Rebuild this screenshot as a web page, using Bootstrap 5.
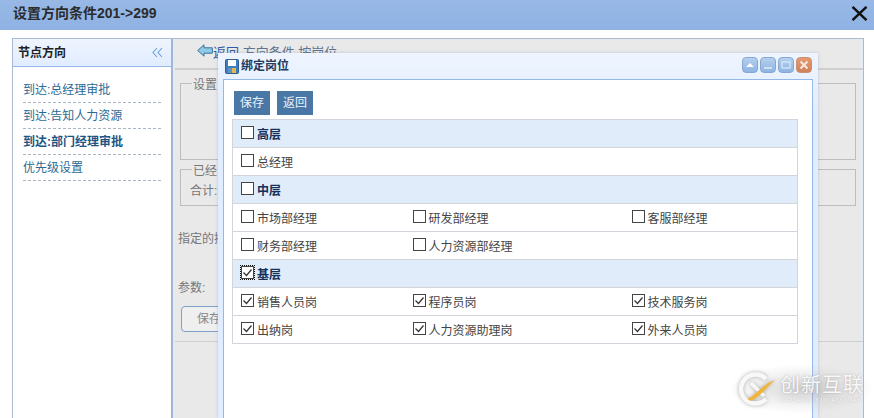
<!DOCTYPE html>
<html lang="zh">
<head>
<meta charset="utf-8">
<title>设置方向条件</title>
<link href="https://cdn.jsdelivr.net/npm/bootstrap@5.3.0/dist/css/bootstrap.min.css" rel="stylesheet">
<style>
html,body{height:418px;overflow:hidden}
body{font-family:"Liberation Sans","Noto Sans CJK SC",sans-serif;font-size:12px;color:#444;background:#fff;position:relative}
.topbar{height:30px;background:linear-gradient(#98b9e6,#8fb2e3);padding:0 6px 3px 13px;color:#333}
.topbar h1{font-size:14px;font-weight:700;margin:0;line-height:27px;color:#2b2b2b}
.topx{line-height:0}
.stage{height:388px;padding:8px 10px 0 12px}
.sidepane{width:161px;border:1px solid #a9bad3;border-bottom:0;border-right:2px solid #9db6da}
.sidehead{height:28px;background:linear-gradient(#eff5ff,#e0ecff);border-bottom:1px solid #95b8e7;padding:0 8px 0 5px;font-weight:700;color:#222}
.sidelist{padding:10px 10px 0 10px;list-style:none;margin:0}
.sidelist li{height:26px;line-height:26px;border-bottom:1px dashed #a9b6c2;color:#2b6a94;white-space:nowrap}
.sidelist li.now{font-weight:700;color:#1f5583}
.mainpane{flex:1;background:#e9e9e9;border:1px solid #a9bad3;border-left:0;border-bottom:0;color:#777;padding-left:2px;box-shadow:inset -2px 0 0 #e3ecf8}
.backrow{height:31px;border-bottom:2px solid #cfcfcf;color:#5f7290;padding-left:22px;line-height:28px;font-size:13px;white-space:nowrap;overflow:hidden}
.backrow b{font-weight:400;color:#2a5ca8}
.backrow svg{margin-top:-7px}
.areabox{border:1px solid #bdbdbd;margin:0 7px 0 5px;padding:0 0 0 11px}
.areabox.one{margin-top:13px;height:77px}
.areabox.two{margin-top:9px;height:37px}
.lgd{display:block;width:max-content;background:#e9e9e9;padding:0 1px;margin-top:-6px;line-height:14px}
.heji{padding-top:4px;margin-left:-2px}
.fieldtxt{padding-left:3px;margin:0}
.f1{margin-top:24px}
.f2{margin-top:31px}
.greybtn{display:block;width:60px;height:26px;margin:9px 0 0 6px;border:1px solid #7e9fc6;border-radius:4px;padding-left:15px;line-height:24px;color:#888;background:#efefef}
.rule{border-top:1px solid #cfcfcf;margin-top:9px}
.winbox{position:absolute;left:218px;top:53px;width:600px;height:365px;overflow:hidden;background:linear-gradient(#eff5ff,#e0ecff 60px);box-shadow:0 0 3px rgba(120,140,170,.4);padding:0 5px}
.winhead{height:26px;padding-left:2px;font-weight:700;color:#223a5e}
.winicon{margin-right:2px}
.wintools{margin-left:auto;gap:2px;margin-top:-2px;margin-right:1px}
.tool{width:16px;height:16px;border-radius:4px;border:1px solid #85a7d3;background:linear-gradient(#b6d0ef,#8fb4e2);line-height:0}
.tool.shut{background:linear-gradient(#e49a72,#d0805a);border-color:#c9916f}
.winbody{background:#fff;border:1px solid #95b8e7;border-bottom:0;height:339px;padding:11px 15px 0 8px}
.squarebtn{background:#4a78a6;color:#e9f1fa;border:0;border-radius:0;height:24px;width:36px;padding:0;font-size:12px;line-height:24px}
.btnline{gap:7px;height:28px;padding-left:2px}
.bindtable{width:566px;margin:0;table-layout:fixed;border-collapse:collapse;border:1px solid #d2d6dc;--bs-table-bg:transparent;--bs-table-border-color:#d2d6dc}
.bindtable td{height:28px;padding:2px 0 0 8px;vertical-align:middle;border-width:0 0 1px 0;border-style:solid;border-color:#d2d6dc;color:#444;white-space:nowrap;line-height:14px}
.bindtable tr.grp td{background:#e1ecfa;font-weight:700;color:#12305c;font-size:12px}
.pick{display:flex;align-items:center;gap:3px;margin:0}
.pick input.form-check-input{width:13px;height:13px;margin:-4px 0 0 0;flex:none;border:1px solid #444;border-radius:0;background-color:#fff;box-shadow:none;background-size:13px 13px}
.pick input.form-check-input:checked{background-color:#fff;border-color:#444;background-image:url("data:image/svg+xml,%3Csvg xmlns='http://www.w3.org/2000/svg' viewBox='0 0 13 13'%3E%3Cpath d='M2.500 6.500l3 3 5-6' fill='none' stroke='%23333' stroke-width='1.2'/%3E%3C/svg%3E")}
.pick input.dotted{outline:1px dotted #111;outline-offset:0}
.mark-logo{position:absolute;left:730px;top:364px;width:144px;height:50px;padding-left:9px;background:radial-gradient(ellipse 50% 50% at 50% 50%,rgba(140,140,140,.42),rgba(190,190,190,.22) 60%,rgba(200,200,200,0) 100%)}
.logomark{filter:drop-shadow(0 0 2px rgba(110,110,110,.55))}
.marktext{margin-left:5px;color:#f8f8f8;text-shadow:0 0 2px rgba(120,120,120,.5)}
.markname{display:block;font-size:20px;letter-spacing:1px;line-height:22px;white-space:nowrap}
.marksub{display:block;font-size:6px;letter-spacing:1.100px;line-height:8px;white-space:nowrap;opacity:.8}
</style>
</head>
<body>
<header class="topbar d-flex align-items-center justify-content-between">
  <h1>设置方向条件201-&gt;299</h1>
  <svg class="topx" width="17" height="15" viewBox="0 0 17 15" aria-label="关闭"><path d="M1.500 .8L15.500 14.200M15.500 .8L1.500 14.200" stroke="#111" stroke-width="2.400" fill="none"/></svg>
</header>
<div class="stage d-flex">
  <aside class="sidepane flex-shrink-0">
    <div class="sidehead d-flex align-items-center justify-content-between">
      <span>节点方向</span>
      <svg width="11" height="11" viewBox="0 0 11 11"><path d="M5 1L1 5.500 5 10M10 1L6 5.500 10 10" fill="none" stroke="#6d9fd6" stroke-width="1.100"/></svg>
    </div>
    <ul class="sidelist">
      <li>到达:总经理审批</li>
      <li>到达:告知人力资源</li>
      <li class="now">到达:部门经理审批</li>
      <li>优先级设置</li>
    </ul>
  </aside>
  <main class="mainpane">
    <div class="backrow">
      <svg width="16" height="13" viewBox="0 0 16 13"><path d="M.7 6.500L7 .8v3h8.300v5.400H7v3z" fill="#8fcbe6" stroke="#3a6f9a"/></svg><b>返回</b> 方向条件 按岗位
    </div>
    <div class="areabox one"><span class="lgd">设置</span></div>
    <div class="areabox two"><span class="lgd">已经</span><div class="heji">合计:</div></div>
    <p class="fieldtxt f1">指定的接收人</p>
    <p class="fieldtxt f2">参数:</p>
    <span class="greybtn">保存</span>
    <div class="rule"></div>
  </main>
</div>

<section class="winbox">
  <div class="winhead d-flex align-items-center">
    <svg width="14" height="15" viewBox="0 0 14 15" class="flex-shrink-0 winicon"><rect x=".5" y=".5" width="13" height="14" rx="1" fill="#3f7fc0" stroke="#2b5f96"/><rect x="3" y="1" width="8" height="6" fill="#fff"/><rect x="3" y="9" width="8" height="5" fill="#e8b84a"/><rect x="3" y="9" width="4" height="5" fill="#5e93c7"/></svg>
    <span>绑定岗位</span>
    <div class="wintools d-flex">
      <div class="tool"><svg width="14" height="14" viewBox="0 0 14 14"><path d="M3 9l4-4 4 4z" fill="#fff"/></svg></div>
      <div class="tool"><svg width="14" height="14" viewBox="0 0 14 14"><path d="M3 10h8" stroke="#dce9f8" stroke-width="1.600"/></svg></div>
      <div class="tool"><svg width="14" height="14" viewBox="0 0 14 14"><rect x="3" y="4" width="8" height="6" fill="none" stroke="#dce9f8" stroke-width="1.200"/></svg></div>
      <div class="tool shut"><svg width="14" height="14" viewBox="0 0 14 14"><path d="M3.500 3.500l7 7M10.500 3.500l-7 7" stroke="#f6e9e2" stroke-width="2"/></svg></div>
    </div>
  </div>
  <div class="winbody">
    <div class="btnline d-flex">
      <button class="btn squarebtn" type="button">保存</button>
      <button class="btn squarebtn" type="button">返回</button>
    </div>
    <table class="table bindtable">
      <colgroup><col style="width:172px"><col style="width:219px"><col></colgroup>
      <tbody>
        <tr class="grp"><td colspan="3"><label class="pick"><input class="form-check-input" type="checkbox">高层</label></td></tr>
        <tr><td colspan="3"><label class="pick"><input class="form-check-input" type="checkbox">总经理</label></td></tr>
        <tr class="grp"><td colspan="3"><label class="pick"><input class="form-check-input" type="checkbox">中层</label></td></tr>
        <tr><td><label class="pick"><input class="form-check-input" type="checkbox">市场部经理</label></td><td><label class="pick"><input class="form-check-input" type="checkbox">研发部经理</label></td><td><label class="pick"><input class="form-check-input" type="checkbox">客服部经理</label></td></tr>
        <tr><td><label class="pick"><input class="form-check-input" type="checkbox">财务部经理</label></td><td colspan="2"><label class="pick"><input class="form-check-input" type="checkbox">人力资源部经理</label></td></tr>
        <tr class="grp"><td colspan="3"><label class="pick"><input class="form-check-input dotted" type="checkbox" checked>基层</label></td></tr>
        <tr><td><label class="pick"><input class="form-check-input" type="checkbox" checked>销售人员岗</label></td><td><label class="pick"><input class="form-check-input" type="checkbox" checked>程序员岗</label></td><td><label class="pick"><input class="form-check-input" type="checkbox" checked>技术服务岗</label></td></tr>
        <tr><td><label class="pick"><input class="form-check-input" type="checkbox" checked>出纳岗</label></td><td><label class="pick"><input class="form-check-input" type="checkbox" checked>人力资源助理岗</label></td><td><label class="pick"><input class="form-check-input" type="checkbox" checked>外来人员岗</label></td></tr>
      </tbody>
    </table>
  </div>
</section>

<div class="mark-logo d-flex align-items-center">
  <svg width="36" height="34" viewBox="0 0 36 34" class="flex-shrink-0 logomark"><path d="M27 7A14.500 14.500 0 1 0 27 27" fill="none" stroke="#f8f8f8" stroke-width="4.500"/><path d="M12 11l13 13" stroke="#f8f8f8" stroke-width="3.500"/><path d="M8 27C15 25 22 13 36 8 28 15 21 25 12 29z" fill="#efb53c"/></svg>
  <div class="marktext">
    <span class="markname">创新互联</span>
    <span class="marksub">CHUANG XIN HU LIAN</span>
  </div>
</div>
</body>
</html>
